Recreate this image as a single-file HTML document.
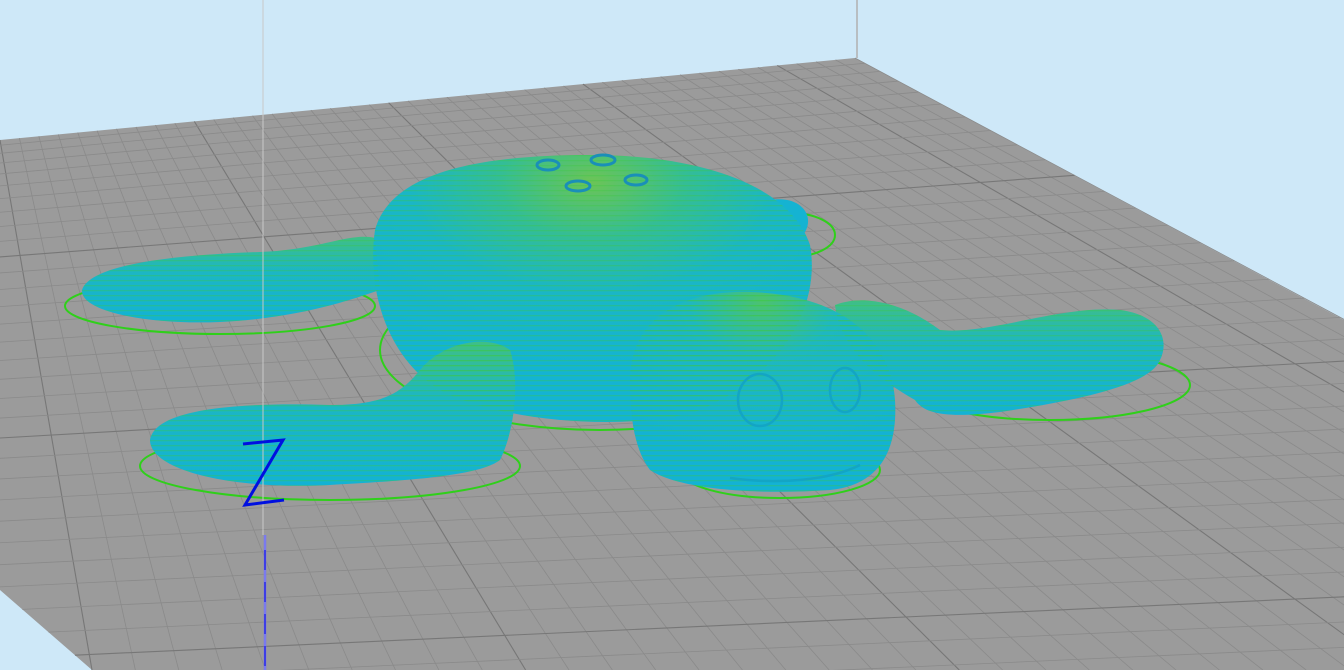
<!DOCTYPE html>
<html><head><style>html,body{margin:0;padding:0;background:#cee8f8;overflow:hidden;width:1344px;height:670px}svg{display:block}</style></head>
<body>
<svg id="s" width="1344" height="670" viewBox="0 0 1344 670" xmlns="http://www.w3.org/2000/svg">
<defs>
<radialGradient id="shellg" cx="0.5" cy="0.1" r="0.7">
<stop offset="0" stop-color="#6cc456"/><stop offset="0.3" stop-color="#34bd96"/><stop offset="0.6" stop-color="#1ab6c6"/><stop offset="1" stop-color="#14b3d3"/>
</radialGradient>
<linearGradient id="fl" x1="0" y1="0" x2="0" y2="1">
<stop offset="0" stop-color="#3fbf86"/><stop offset="0.4" stop-color="#1cb6c4"/><stop offset="1" stop-color="#13b2d4"/>
</linearGradient>
<radialGradient id="headg" cx="0.5" cy="0.05" r="0.8">
<stop offset="0" stop-color="#4cc270"/><stop offset="0.35" stop-color="#1eb7c2"/><stop offset="1" stop-color="#13b2d4"/>
</radialGradient>
<pattern id="str" width="6" height="5" patternUnits="userSpaceOnUse">
<rect width="6" height="1.3" fill="#3dc840" opacity="0.35"/>
</pattern>
</defs>
<rect width="1344" height="670" fill="#cee8f8"/>
<line x1="857" y1="0" x2="857" y2="58" stroke="#b0b0b0" stroke-width="1.5"/>
<polygon points="0,140 855,58 1344,320 1344,670 92,670 0,590" fill="#9b9b9b"/>
<g id="grid" stroke="#888" stroke-width="0.8" fill="none"></g>
<g fill="none" stroke="#2fd01a" stroke-width="2">
<ellipse cx="220" cy="306" rx="155" ry="28"/>
<ellipse cx="330" cy="466" rx="190" ry="34"/>
<ellipse cx="600" cy="350" rx="220" ry="80"/>
<ellipse cx="780" cy="470" rx="100" ry="28"/>
<ellipse cx="1050" cy="385" rx="140" ry="35"/>
<ellipse cx="790" cy="235" rx="45" ry="22"/>
</g>
<g id="turtle">
<path d="M82,290 C90,265 170,255 260,252 C320,250 350,232 375,238 L380,290 C350,300 300,318 220,322 C150,325 80,312 82,290 Z" fill="url(#fl)"/>
<path d="M770,200 C800,195 815,215 805,232 C795,245 770,245 760,235 Z" fill="#15b3d2"/>
<path d="M375,230 C390,175 470,155 590,155 C700,155 790,185 810,245 C820,300 790,370 700,410 C640,430 520,425 450,395 C395,370 365,300 375,230 Z" fill="url(#shellg)"/>
<path d="M150,440 C155,410 230,402 330,405 C380,405 400,395 420,370 C445,340 490,335 510,350 C520,380 515,430 500,460 C480,475 420,480 330,485 C230,490 150,470 150,440 Z" fill="url(#fl)"/>
<path d="M835,305 C860,295 900,300 940,330 C990,335 1060,305 1120,310 C1160,315 1170,340 1160,360 C1150,385 1080,400 1000,412 C950,418 925,415 915,400 C880,380 840,350 835,305 Z" fill="url(#fl)"/>
<path d="M630,380 C630,320 680,290 750,292 C830,294 890,330 895,400 C898,450 880,485 830,490 C760,495 680,490 650,470 C635,450 630,420 630,380 Z" fill="url(#headg)"/>
</g>
<g fill="url(#str)">
<path d="M82,290 C90,265 170,255 260,252 C320,250 350,232 375,238 L380,290 C350,300 300,318 220,322 C150,325 80,312 82,290 Z"/>
<path d="M375,230 C390,175 470,155 590,155 C700,155 790,185 810,245 C820,300 790,370 700,410 C640,430 520,425 450,395 C395,370 365,300 375,230 Z"/>
<path d="M150,440 C155,410 230,402 330,405 C380,405 400,395 420,370 C445,340 490,335 510,350 C520,380 515,430 500,460 C480,475 420,480 330,485 C230,490 150,470 150,440 Z"/>
<path d="M835,305 C860,295 900,300 940,330 C990,335 1060,305 1120,310 C1160,315 1170,340 1160,360 C1150,385 1080,400 1000,412 C950,418 925,415 915,400 C880,380 840,350 835,305 Z"/>
<path d="M630,380 C630,320 680,290 750,292 C830,294 890,330 895,400 C898,450 880,485 830,490 C760,495 680,490 650,470 C635,450 630,420 630,380 Z"/>
</g>
<g fill="none" stroke="#13a5c4" stroke-width="2.5">
<ellipse cx="760" cy="400" rx="22" ry="26"/>
<ellipse cx="845" cy="390" rx="15" ry="22"/>
<path d="M730,478 C780,485 830,480 860,465"/>
</g>
<g fill="none" stroke="#1a8fb8" stroke-width="3">
<ellipse cx="548" cy="165" rx="11" ry="5"/><ellipse cx="603" cy="160" rx="12" ry="5"/>
<ellipse cx="578" cy="186" rx="12" ry="5"/><ellipse cx="636" cy="180" rx="11" ry="5"/>
</g>
<line x1="263" y1="0" x2="263" y2="535" stroke="#c8c8c8" stroke-width="1"/>
<line x1="265" y1="535" x2="265" y2="670" stroke="#7a7aee" stroke-width="2.5"/>
<line x1="265" y1="550" x2="265" y2="670" stroke="#0000dd" stroke-width="1" stroke-dasharray="20,12"/>
<polyline points="243,444 283,440 245,505 284,500" fill="none" stroke="#0010e0" stroke-width="3"/>
</svg>
<script>
var g=document.getElementById('grid'),ns='http://www.w3.org/2000/svg';
function L(a,b,c,d,w,col){var l=document.createElementNS(ns,'line');l.setAttribute('x1',a);l.setAttribute('y1',b);l.setAttribute('x2',c);l.setAttribute('y2',d);l.setAttribute('stroke-width',w);l.setAttribute('stroke',col);g.appendChild(l);}
var N=44;
for(var i=0;i<=N;i++){var s=i/N;var x1=855*s,y1=140-82*s;var x2=92+1908*s;L(x1,y1,x2,670,i%10==0?1.1:0.8,i%10==0?'#777':'#8a8a8a');}
var M=34;
for(var j=1;j<=M;j++){var u=j/M;var uu=Math.pow(u,1.35);
var ly=140+uu*(610); var lx=0; if(ly>590){lx=(ly-590)*92/80;}
var rx=855+uu*(2000-855), ry=58+uu*612;
L(lx,ly,rx,ry,j%10==0?1.1:0.8,j%10==0?'#777':'#8a8a8a');}
</script>
</body></html>
